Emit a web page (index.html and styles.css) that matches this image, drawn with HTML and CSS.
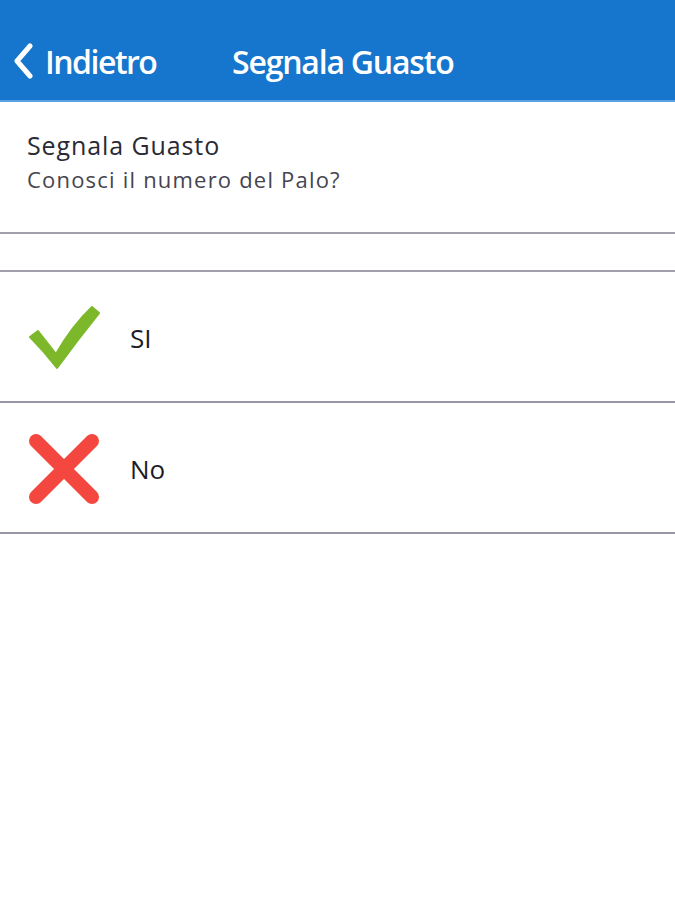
FILE: index.html
```html
<!DOCTYPE html>
<html lang="it">
<head>
<meta charset="utf-8">
<title>Segnala Guasto</title>
<link rel="stylesheet" href="styles.css">
</head>
<body>
<header class="topbar">
  <a class="back" href="#">
    <svg class="chev" width="22" height="36" viewBox="0 0 22 36"><path d="M18 3 L5 18 L18 33" fill="none" stroke="#fff" stroke-width="5" stroke-linecap="round" stroke-linejoin="round"/></svg>
    <span>Indietro</span>
  </a>
  <h1 class="title">Segnala Guasto</h1>
</header>
<section class="intro">
  <div class="intro-title">Segnala Guasto</div>
  <div class="intro-sub">Conosci il numero del Palo?</div>
</section>
<div class="spacer"></div>
<ul class="options">
  <li class="option">
    <svg class="icon" width="72" height="68" viewBox="0 0 72 68"><path d="M2 33 L10 27 L28 50 Q44 22 64 3 L71 9 Q50 35 29 64 Q16 47 2 33 Z" fill="#7cb82a" stroke="#7cb82a" stroke-width="2" stroke-linejoin="round"/></svg>
    <span class="label">SI</span>
  </li>
  <li class="option">
    <svg class="icon" width="72" height="72" viewBox="0 0 72 72"><path d="M8 8 L64 64 M64 8 L8 64" fill="none" stroke="#f4473f" stroke-width="14" stroke-linecap="round"/></svg>
    <span class="label">No</span>
  </li>
</ul>
</body>
</html>
```
FILE: styles.css
```css
* { box-sizing: border-box; }
html, body { margin: 0; padding: 0; background: #fff; }
body { font-family: "Open Sans", "Noto Sans", sans-serif; color: #222; }

.topbar {
  height: 102px;
  background: #1675cc;
  border-bottom: 2px solid #5aa2e6;
  display: flex;
  align-items: center;
  padding: 22px 0 0 12px;
}
.back {
  display: flex;
  align-items: center;
  gap: 11px;
  color: #fff;
  text-decoration: none;
  font-size: 32px;
  font-weight: 600;
  letter-spacing: -1.5px;
  width: 220px;
}
.chev { flex: none; }
.title {
  margin: 0;
  color: #fff;
  font-size: 32px;
  font-weight: 600;
  letter-spacing: -1.2px;
}

.intro {
  height: 132px;
  padding: 26px 27px 0;
  border-bottom: 2px solid #a09fae;
}
.intro-title { font-size: 25px; color: #2a2a35; line-height: 34px; letter-spacing: 0.9px; }
.intro-sub { font-size: 22px; color: #45454f; line-height: 34px; letter-spacing: 1.2px; }

.spacer { height: 38px; border-bottom: 2px solid #a09fae; }

.options { list-style: none; margin: 0; padding: 0; }
.option {
  height: 131px;
  display: flex;
  align-items: center;
  padding-left: 28px;
  padding-top: 2px;
  border-bottom: 2px solid #9896a6;
}
.icon { flex: none; width: 72px; }
.label {
  margin-left: 30px;
  font-size: 26px;
  color: #1c1c28;
}
```
